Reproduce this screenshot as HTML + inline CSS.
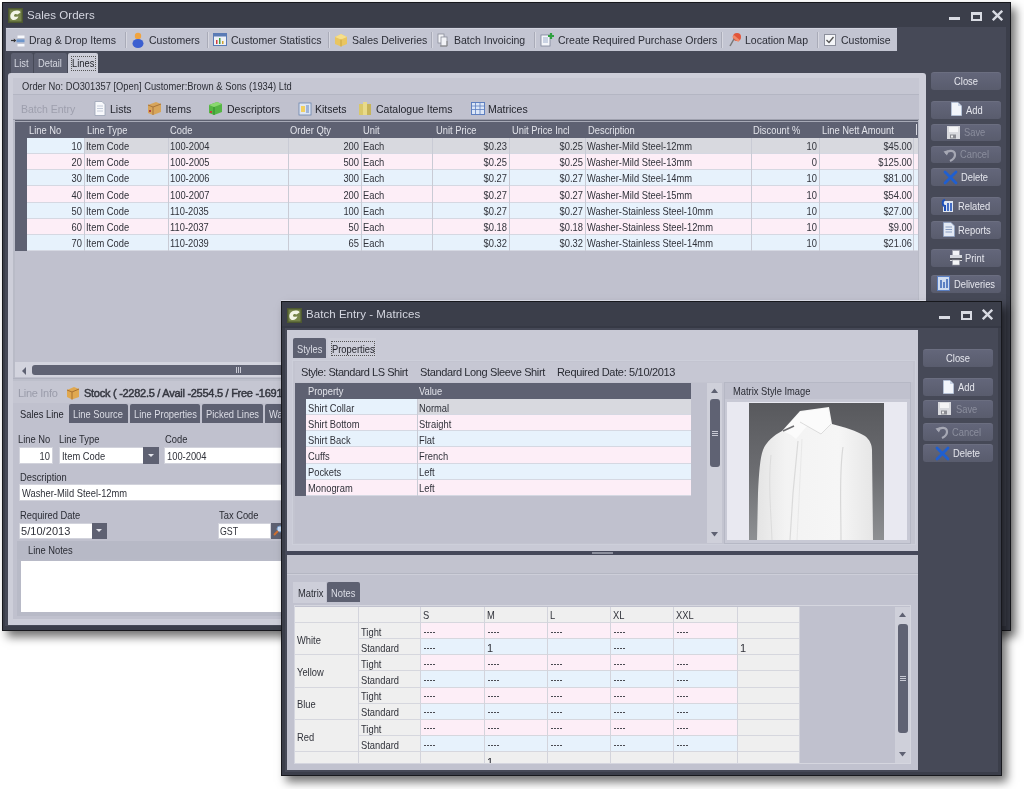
<!DOCTYPE html><html><head><meta charset="utf-8"><style>
html,body{margin:0;padding:0;background:#fff;width:1024px;height:789px;overflow:hidden;position:relative;font-family:"Liberation Sans",sans-serif;}
body{filter:blur(0.5px);}
div{position:absolute;box-sizing:border-box;}
.t{white-space:nowrap;}
</style></head><body>
<div style="left:2px;top:2px;width:1009px;height:629px;box-shadow:5px 6px 9px rgba(0,0,0,0.55);background:#3b3e4a"></div>
<div style="left:2px;top:2px;width:1009px;height:629px;border:1px solid #17181d;background:#3b3e4a"></div>
<div style="left:5px;top:27px;width:1001px;height:599px;background:#464957"></div>
<svg style="position:absolute;left:8px;top:8px" width="15" height="15" viewBox="0 0 15 15"><rect x="0" y="0" width="15" height="15" fill="#4d5830"/><rect x="1.5" y="1.5" width="12" height="12" fill="#76844a"/><path d="M2.5 9.5 C1.5 5.5 5 2 9.5 2.5 C11.5 2.8 12.5 3.5 12.5 4.5 L9.5 6.5 C8 5.5 6 6 6 7.5 C6 8.5 7 9 8 8.8 L10.5 8.5 C9.5 11 7.5 12.5 5 12 C3.8 11.7 2.8 10.8 2.5 9.5 Z" fill="#f2f4e6"/></svg>
<div class="t" style="left:27px;top:9.77px;font-size:11.5px;line-height:11.5px;color:#d5d7e1;letter-spacing:0.05px;">Sales Orders</div>
<div style="left:949px;top:17px;width:11px;height:3px;background:#d9dbe3"></div>
<div style="left:971px;top:12px;width:11px;height:9px;border:2px solid #d9dbe3;border-top-width:3px"></div>
<svg style="position:absolute;left:992px;top:10px" width="11" height="11" viewBox="0 0 11 11"><path d="M1.6 1.6 L9.4 9.4 M9.4 1.6 L1.6 9.4" stroke="#d9dbe3" stroke-width="2.3" stroke-linecap="square"/></svg>
<div style="left:6px;top:28px;width:891px;height:23px;background:#c3c5d2;border-top:1px solid #d2d4df"></div>
<div class="t" style="left:29px;top:35.11px;font-size:10.5px;line-height:10.5px;color:#2b2d36;letter-spacing:0px;">Drag &amp; Drop Items</div>
<div style="left:125px;top:32px;width:1px;height:16px;background:#a9abb8;border-right:1px solid #d6d7e0;width:2px"></div>
<div class="t" style="left:149px;top:35.11px;font-size:10.5px;line-height:10.5px;color:#2b2d36;letter-spacing:0px;">Customers</div>
<div style="left:207px;top:32px;width:1px;height:16px;background:#a9abb8;border-right:1px solid #d6d7e0;width:2px"></div>
<div class="t" style="left:231px;top:35.11px;font-size:10.5px;line-height:10.5px;color:#2b2d36;letter-spacing:0px;">Customer Statistics</div>
<div style="left:328px;top:32px;width:1px;height:16px;background:#a9abb8;border-right:1px solid #d6d7e0;width:2px"></div>
<div class="t" style="left:352px;top:35.11px;font-size:10.5px;line-height:10.5px;color:#2b2d36;letter-spacing:0px;">Sales Deliveries</div>
<div style="left:431px;top:32px;width:1px;height:16px;background:#a9abb8;border-right:1px solid #d6d7e0;width:2px"></div>
<div class="t" style="left:454px;top:35.11px;font-size:10.5px;line-height:10.5px;color:#2b2d36;letter-spacing:0px;">Batch Invoicing</div>
<div style="left:534px;top:32px;width:1px;height:16px;background:#a9abb8;border-right:1px solid #d6d7e0;width:2px"></div>
<div class="t" style="left:558px;top:35.11px;font-size:10.5px;line-height:10.5px;color:#2b2d36;letter-spacing:0px;">Create Required Purchase Orders</div>
<div style="left:721px;top:32px;width:1px;height:16px;background:#a9abb8;border-right:1px solid #d6d7e0;width:2px"></div>
<div class="t" style="left:745px;top:35.11px;font-size:10.5px;line-height:10.5px;color:#2b2d36;letter-spacing:0px;">Location Map</div>
<div style="left:817px;top:32px;width:1px;height:16px;background:#a9abb8;border-right:1px solid #d6d7e0;width:2px"></div>
<div class="t" style="left:841px;top:35.11px;font-size:10.5px;line-height:10.5px;color:#2b2d36;letter-spacing:0px;">Customise</div>
<svg style="position:absolute;left:10px;top:33px" width="16" height="15" viewBox="0 0 16 15"><path d="M1 7.5 H4.5" stroke="#333" stroke-width="1.2"/><path d="M3.8 5.5 L6.3 7.5 L3.8 9.5 Z" fill="#333"/><rect x="7.5" y="2.5" width="7" height="2.5" fill="#f6f8fc"/><rect x="6.5" y="6.3" width="8" height="3" fill="#6d96cc"/><rect x="7.5" y="11" width="7" height="2.5" fill="#f6f8fc"/></svg>
<svg style="position:absolute;left:132px;top:32px" width="12" height="16" viewBox="0 0 12 16"><circle cx="6" cy="4" r="3.2" fill="#f0a440"/><ellipse cx="6" cy="11.5" rx="5.5" ry="4.5" fill="#3b5fd0"/></svg>
<svg style="position:absolute;left:213px;top:33px" width="14" height="13" viewBox="0 0 14 13"><rect x="0.5" y="0.5" width="13" height="12" fill="#eef1f6" stroke="#5a7bb5"/><rect x="0.5" y="0.5" width="13" height="3" fill="#5a7bb5"/><rect x="3" y="7" width="1.5" height="4" fill="#d04040"/><rect x="6" y="5" width="1.5" height="6" fill="#40a040"/><rect x="9" y="8" width="1.5" height="3" fill="#d0a030"/></svg>
<svg style="position:absolute;left:334px;top:33px" width="14" height="14" viewBox="0 0 14 14"><path d="M1 4 L7 1 L13 4 L13 11 L7 13.5 L1 11 Z" fill="#e9c560"/><path d="M1 4 L7 6.5 L13 4 L7 1 Z" fill="#f6df8a"/><path d="M7 6.5 V13.5" stroke="#c9a440"/></svg>
<svg style="position:absolute;left:436px;top:33px" width="14" height="14" viewBox="0 0 14 14"><rect x="2" y="1" width="6" height="9" fill="#f2f3f7" stroke="#8a8d99" stroke-width="0.8"/><rect x="5" y="4" width="6" height="9" fill="#f2f3f7" stroke="#8a8d99" stroke-width="0.8"/><path d="M11 8 V13 H4" stroke="#888" fill="none"/></svg>
<svg style="position:absolute;left:540px;top:32px" width="15" height="15" viewBox="0 0 15 15"><rect x="1" y="3" width="9" height="11" fill="#f4f6fa" stroke="#7d8599" stroke-width="0.8"/><path d="M3 6 H8 M3 8 H8 M3 10 H8" stroke="#8aa0c0" stroke-width="0.8"/><path d="M11 1 V7 M8 4 H14" stroke="#2fa040" stroke-width="2.2"/></svg>
<svg style="position:absolute;left:728px;top:32px" width="14" height="16" viewBox="0 0 14 16"><circle cx="9" cy="5" r="4" fill="#e2553a"/><path d="M6 7 L2 14" stroke="#777" stroke-width="1.5"/><path d="M5 4 L11 9" stroke="#f08a6a" stroke-width="2.5"/></svg>
<svg style="position:absolute;left:824px;top:34px" width="12" height="12" viewBox="0 0 12 12"><rect x="0.5" y="0.5" width="11" height="11" fill="#f4f5f8" stroke="#8c8f9c"/><path d="M2.5 6 L5 8.5 L9.5 3" stroke="#555" stroke-width="1.3" fill="none"/></svg>
<div style="left:11px;top:53px;width:22px;height:20px;background:#5d6071;border-radius:2px 2px 0 0"></div>
<div class="t" style="left:14px;top:58.19px;font-size:11px;line-height:11px;color:#d6d8e2;letter-spacing:0px;transform:scaleX(0.85);transform-origin:left center;">List</div>
<div style="left:34px;top:53px;width:33px;height:20px;background:#5d6071;border-radius:2px 2px 0 0"></div>
<div class="t" style="left:38px;top:58.19px;font-size:11px;line-height:11px;color:#d6d8e2;letter-spacing:0px;transform:scaleX(0.85);transform-origin:left center;">Detail</div>
<div style="left:68px;top:53px;width:30px;height:21px;background:#cdced9;border-radius:2px 2px 0 0"></div>
<div style="left:71px;top:56px;width:25px;height:15px;border:1px dotted #555"></div>
<div class="t" style="left:72px;top:58.19px;font-size:11px;line-height:11px;color:#1e1f26;letter-spacing:0px;transform:scaleX(0.85);transform-origin:left center;">Lines</div>
<div style="left:8px;top:73px;width:918px;height:552px;background:#cdced9;border-radius:3px 3px 0 0"></div>
<div style="left:13px;top:78px;width:906px;height:541px;background:#c0c1ce"></div>
<div style="left:13px;top:78px;width:906px;height:17px;background:#c6c7d3;border-bottom:1px solid #b4b6c3"></div>
<div class="t" style="left:22px;top:80.69px;font-size:11px;line-height:11px;color:#2c2e36;letter-spacing:0px;transform:scaleX(0.85);transform-origin:left center;">Order No: DO301357 [Open] Customer:Brown &amp; Sons (1934) Ltd</div>
<div class="t" style="left:21px;top:104.11px;font-size:10.5px;line-height:10.5px;color:#9d9fad;letter-spacing:0px;">Batch Entry</div>
<div class="t" style="left:110px;top:104.11px;font-size:10.5px;line-height:10.5px;color:#23252d;letter-spacing:0px;">Lists</div>
<div class="t" style="left:165.5px;top:104.11px;font-size:10.5px;line-height:10.5px;color:#23252d;letter-spacing:0px;">Items</div>
<div class="t" style="left:227px;top:104.11px;font-size:10.5px;line-height:10.5px;color:#23252d;letter-spacing:0px;">Descriptors</div>
<div class="t" style="left:315px;top:104.11px;font-size:10.5px;line-height:10.5px;color:#23252d;letter-spacing:0px;">Kitsets</div>
<div class="t" style="left:376px;top:104.11px;font-size:10.5px;line-height:10.5px;color:#23252d;letter-spacing:0px;">Catalogue Items</div>
<div class="t" style="left:488px;top:104.11px;font-size:10.5px;line-height:10.5px;color:#23252d;letter-spacing:0px;">Matrices</div>
<svg style="position:absolute;left:94px;top:101px" width="12" height="15" viewBox="0 0 12 15"><path d="M1 0.5 H8 L11 3.5 V14.5 H1 Z" fill="#f8f9fc" stroke="#9aa3b5" stroke-width="0.8"/><path d="M3 5 H9 M3 7.5 H9 M3 10 H9" stroke="#b5bfd0" stroke-width="0.8"/></svg>
<svg style="position:absolute;left:147px;top:101px" width="15" height="15" viewBox="0 0 15 15"><path d="M1 4 L9 1 L14 3 L14 11 L6 14 L1 12 Z" fill="#d7a55a"/><path d="M1 4 L6 6 L14 3" stroke="#a8743a" fill="none"/><path d="M6 6 V14" stroke="#a8743a"/><rect x="2" y="9" width="2" height="2" fill="#b04040"/></svg>
<svg style="position:absolute;left:208px;top:101px" width="15" height="15" viewBox="0 0 15 15"><path d="M1 4 L9 1 L14 3 L14 11 L6 14 L1 12 Z" fill="#55b544"/><path d="M1 4 L6 6 L14 3 L9 1 Z" fill="#8ad870"/><path d="M6 6 V14" stroke="#2f8a2a"/><rect x="2" y="10" width="2" height="2" fill="#c04040"/></svg>
<svg style="position:absolute;left:298px;top:101px" width="14" height="15" viewBox="0 0 14 15"><rect x="1" y="2" width="12" height="12" fill="#dfe7f2" stroke="#6b86b0" stroke-width="0.8"/><rect x="3" y="5" width="4" height="6" fill="#f2d060"/><rect x="8" y="4" width="3" height="8" fill="#9fb4d8"/></svg>
<svg style="position:absolute;left:358px;top:101px" width="14" height="15" viewBox="0 0 14 15"><rect x="1" y="3" width="4" height="11" fill="#d9c86a"/><rect x="5" y="1" width="4" height="13" fill="#e8da8a"/><rect x="9" y="3" width="4" height="11" fill="#c7b45a"/></svg>
<svg style="position:absolute;left:471px;top:102px" width="14" height="13" viewBox="0 0 14 13"><rect x="0.5" y="0.5" width="13" height="12" fill="#dbe6f7" stroke="#5d7fc0"/><path d="M0.5 4 H13.5 M0.5 7.5 H13.5 M4.5 0.5 V12.5 M9 0.5 V12.5" stroke="#5d7fc0" stroke-width="0.8"/></svg>
<div style="left:13px;top:119px;width:906px;height:1px;background:#9fa1ae"></div>
<div style="left:13px;top:120px;width:906px;height:260px;background:#b9bbc7"></div>
<div style="left:15px;top:120px;width:903px;height:259px;background:#c0c1ce"></div>
<div style="left:15px;top:120px;width:903px;height:1px;background:#5d6070"></div>
<div style="left:15px;top:121px;width:903px;height:1px;background:#a7a9b6"></div>
<div style="left:15px;top:122px;width:903px;height:16px;background:#5e6172"></div>
<div style="left:15px;top:138px;width:12px;height:113px;background:#5e6172"></div>
<div class="t" style="left:29px;top:124.69px;font-size:11px;line-height:11px;color:#e2e3ea;letter-spacing:0px;transform:scaleX(0.85);transform-origin:left center;">Line No</div>
<div class="t" style="left:87px;top:124.69px;font-size:11px;line-height:11px;color:#e2e3ea;letter-spacing:0px;transform:scaleX(0.85);transform-origin:left center;">Line Type</div>
<div class="t" style="left:170px;top:124.69px;font-size:11px;line-height:11px;color:#e2e3ea;letter-spacing:0px;transform:scaleX(0.85);transform-origin:left center;">Code</div>
<div class="t" style="left:290px;top:124.69px;font-size:11px;line-height:11px;color:#e2e3ea;letter-spacing:0px;transform:scaleX(0.85);transform-origin:left center;">Order Qty</div>
<div class="t" style="left:363px;top:124.69px;font-size:11px;line-height:11px;color:#e2e3ea;letter-spacing:0px;transform:scaleX(0.85);transform-origin:left center;">Unit</div>
<div class="t" style="left:436px;top:124.69px;font-size:11px;line-height:11px;color:#e2e3ea;letter-spacing:0px;transform:scaleX(0.85);transform-origin:left center;">Unit Price</div>
<div class="t" style="left:512px;top:124.69px;font-size:11px;line-height:11px;color:#e2e3ea;letter-spacing:0px;transform:scaleX(0.85);transform-origin:left center;">Unit Price Incl</div>
<div class="t" style="left:588px;top:124.69px;font-size:11px;line-height:11px;color:#e2e3ea;letter-spacing:0px;transform:scaleX(0.85);transform-origin:left center;">Description</div>
<div class="t" style="left:753px;top:124.69px;font-size:11px;line-height:11px;color:#e2e3ea;letter-spacing:0px;transform:scaleX(0.85);transform-origin:left center;">Discount %</div>
<div class="t" style="left:822px;top:124.69px;font-size:11px;line-height:11px;color:#e2e3ea;letter-spacing:0px;transform:scaleX(0.85);transform-origin:left center;">Line Nett Amount</div>
<div style="left:916px;top:124px;width:1px;height:11px;background:#d9dae2"></div>
<div style="left:27px;top:138px;width:891px;height:16px;background:#d8d9df;border-bottom:1px solid #d5d8e2"></div>
<div style="left:27px;top:138px;width:57px;height:16px;background:#e7f2fc;border-bottom:1px solid #d5d8e2"></div>
<div style="left:84px;top:138px;width:1px;height:16px;background:#c9cbd5"></div>
<div style="left:168px;top:138px;width:1px;height:16px;background:#c9cbd5"></div>
<div style="left:288px;top:138px;width:1px;height:16px;background:#c9cbd5"></div>
<div style="left:361px;top:138px;width:1px;height:16px;background:#c9cbd5"></div>
<div style="left:432px;top:138px;width:1px;height:16px;background:#c9cbd5"></div>
<div style="left:509px;top:138px;width:1px;height:16px;background:#c9cbd5"></div>
<div style="left:585px;top:138px;width:1px;height:16px;background:#c9cbd5"></div>
<div style="left:751px;top:138px;width:1px;height:16px;background:#c9cbd5"></div>
<div style="left:819px;top:138px;width:1px;height:16px;background:#c9cbd5"></div>
<div style="left:913px;top:138px;width:1px;height:16px;background:#c9cbd5"></div>
<div class="t" style="left:32px;top:141.19px;width:50px;text-align:right;font-size:11px;line-height:11px;color:#30323a;letter-spacing:0px;transform:scaleX(0.85);transform-origin:right center;">10</div>
<div class="t" style="left:86px;top:141.19px;font-size:11px;line-height:11px;color:#30323a;letter-spacing:0px;transform:scaleX(0.85);transform-origin:left center;">Item Code</div>
<div class="t" style="left:170px;top:141.19px;font-size:11px;line-height:11px;color:#30323a;letter-spacing:0px;transform:scaleX(0.85);transform-origin:left center;">100-2004</div>
<div class="t" style="left:299px;top:141.19px;width:60px;text-align:right;font-size:11px;line-height:11px;color:#30323a;letter-spacing:0px;transform:scaleX(0.85);transform-origin:right center;">200</div>
<div class="t" style="left:363px;top:141.19px;font-size:11px;line-height:11px;color:#30323a;letter-spacing:0px;transform:scaleX(0.85);transform-origin:left center;">Each</div>
<div class="t" style="left:447px;top:141.19px;width:60px;text-align:right;font-size:11px;line-height:11px;color:#30323a;letter-spacing:0px;transform:scaleX(0.85);transform-origin:right center;">$0.23</div>
<div class="t" style="left:523px;top:141.19px;width:60px;text-align:right;font-size:11px;line-height:11px;color:#30323a;letter-spacing:0px;transform:scaleX(0.85);transform-origin:right center;">$0.25</div>
<div class="t" style="left:587px;top:141.19px;font-size:11px;line-height:11px;color:#30323a;letter-spacing:0px;transform:scaleX(0.85);transform-origin:left center;">Washer-Mild Steel-12mm</div>
<div class="t" style="left:757px;top:141.19px;width:60px;text-align:right;font-size:11px;line-height:11px;color:#30323a;letter-spacing:0px;transform:scaleX(0.85);transform-origin:right center;">10</div>
<div class="t" style="left:832px;top:141.19px;width:80px;text-align:right;font-size:11px;line-height:11px;color:#30323a;letter-spacing:0px;transform:scaleX(0.85);transform-origin:right center;">$45.00</div>
<div style="left:27px;top:154px;width:891px;height:16px;background:#fdeef7;border-bottom:1px solid #d5d8e2"></div>
<div style="left:84px;top:154px;width:1px;height:16px;background:#c9cbd5"></div>
<div style="left:168px;top:154px;width:1px;height:16px;background:#c9cbd5"></div>
<div style="left:288px;top:154px;width:1px;height:16px;background:#c9cbd5"></div>
<div style="left:361px;top:154px;width:1px;height:16px;background:#c9cbd5"></div>
<div style="left:432px;top:154px;width:1px;height:16px;background:#c9cbd5"></div>
<div style="left:509px;top:154px;width:1px;height:16px;background:#c9cbd5"></div>
<div style="left:585px;top:154px;width:1px;height:16px;background:#c9cbd5"></div>
<div style="left:751px;top:154px;width:1px;height:16px;background:#c9cbd5"></div>
<div style="left:819px;top:154px;width:1px;height:16px;background:#c9cbd5"></div>
<div style="left:913px;top:154px;width:1px;height:16px;background:#c9cbd5"></div>
<div class="t" style="left:32px;top:157.34px;width:50px;text-align:right;font-size:11px;line-height:11px;color:#30323a;letter-spacing:0px;transform:scaleX(0.85);transform-origin:right center;">20</div>
<div class="t" style="left:86px;top:157.34px;font-size:11px;line-height:11px;color:#30323a;letter-spacing:0px;transform:scaleX(0.85);transform-origin:left center;">Item Code</div>
<div class="t" style="left:170px;top:157.34px;font-size:11px;line-height:11px;color:#30323a;letter-spacing:0px;transform:scaleX(0.85);transform-origin:left center;">100-2005</div>
<div class="t" style="left:299px;top:157.34px;width:60px;text-align:right;font-size:11px;line-height:11px;color:#30323a;letter-spacing:0px;transform:scaleX(0.85);transform-origin:right center;">500</div>
<div class="t" style="left:363px;top:157.34px;font-size:11px;line-height:11px;color:#30323a;letter-spacing:0px;transform:scaleX(0.85);transform-origin:left center;">Each</div>
<div class="t" style="left:447px;top:157.34px;width:60px;text-align:right;font-size:11px;line-height:11px;color:#30323a;letter-spacing:0px;transform:scaleX(0.85);transform-origin:right center;">$0.25</div>
<div class="t" style="left:523px;top:157.34px;width:60px;text-align:right;font-size:11px;line-height:11px;color:#30323a;letter-spacing:0px;transform:scaleX(0.85);transform-origin:right center;">$0.25</div>
<div class="t" style="left:587px;top:157.34px;font-size:11px;line-height:11px;color:#30323a;letter-spacing:0px;transform:scaleX(0.85);transform-origin:left center;">Washer-Mild Steel-13mm</div>
<div class="t" style="left:757px;top:157.34px;width:60px;text-align:right;font-size:11px;line-height:11px;color:#30323a;letter-spacing:0px;transform:scaleX(0.85);transform-origin:right center;">0</div>
<div class="t" style="left:832px;top:157.34px;width:80px;text-align:right;font-size:11px;line-height:11px;color:#30323a;letter-spacing:0px;transform:scaleX(0.85);transform-origin:right center;">$125.00</div>
<div style="left:27px;top:170px;width:891px;height:16px;background:#e7f2fc;border-bottom:1px solid #d5d8e2"></div>
<div style="left:84px;top:170px;width:1px;height:16px;background:#c9cbd5"></div>
<div style="left:168px;top:170px;width:1px;height:16px;background:#c9cbd5"></div>
<div style="left:288px;top:170px;width:1px;height:16px;background:#c9cbd5"></div>
<div style="left:361px;top:170px;width:1px;height:16px;background:#c9cbd5"></div>
<div style="left:432px;top:170px;width:1px;height:16px;background:#c9cbd5"></div>
<div style="left:509px;top:170px;width:1px;height:16px;background:#c9cbd5"></div>
<div style="left:585px;top:170px;width:1px;height:16px;background:#c9cbd5"></div>
<div style="left:751px;top:170px;width:1px;height:16px;background:#c9cbd5"></div>
<div style="left:819px;top:170px;width:1px;height:16px;background:#c9cbd5"></div>
<div style="left:913px;top:170px;width:1px;height:16px;background:#c9cbd5"></div>
<div class="t" style="left:32px;top:173.49px;width:50px;text-align:right;font-size:11px;line-height:11px;color:#30323a;letter-spacing:0px;transform:scaleX(0.85);transform-origin:right center;">30</div>
<div class="t" style="left:86px;top:173.49px;font-size:11px;line-height:11px;color:#30323a;letter-spacing:0px;transform:scaleX(0.85);transform-origin:left center;">Item Code</div>
<div class="t" style="left:170px;top:173.49px;font-size:11px;line-height:11px;color:#30323a;letter-spacing:0px;transform:scaleX(0.85);transform-origin:left center;">100-2006</div>
<div class="t" style="left:299px;top:173.49px;width:60px;text-align:right;font-size:11px;line-height:11px;color:#30323a;letter-spacing:0px;transform:scaleX(0.85);transform-origin:right center;">300</div>
<div class="t" style="left:363px;top:173.49px;font-size:11px;line-height:11px;color:#30323a;letter-spacing:0px;transform:scaleX(0.85);transform-origin:left center;">Each</div>
<div class="t" style="left:447px;top:173.49px;width:60px;text-align:right;font-size:11px;line-height:11px;color:#30323a;letter-spacing:0px;transform:scaleX(0.85);transform-origin:right center;">$0.27</div>
<div class="t" style="left:523px;top:173.49px;width:60px;text-align:right;font-size:11px;line-height:11px;color:#30323a;letter-spacing:0px;transform:scaleX(0.85);transform-origin:right center;">$0.27</div>
<div class="t" style="left:587px;top:173.49px;font-size:11px;line-height:11px;color:#30323a;letter-spacing:0px;transform:scaleX(0.85);transform-origin:left center;">Washer-Mild Steel-14mm</div>
<div class="t" style="left:757px;top:173.49px;width:60px;text-align:right;font-size:11px;line-height:11px;color:#30323a;letter-spacing:0px;transform:scaleX(0.85);transform-origin:right center;">10</div>
<div class="t" style="left:832px;top:173.49px;width:80px;text-align:right;font-size:11px;line-height:11px;color:#30323a;letter-spacing:0px;transform:scaleX(0.85);transform-origin:right center;">$81.00</div>
<div style="left:27px;top:186px;width:891px;height:17px;background:#fdeef7;border-bottom:1px solid #d5d8e2"></div>
<div style="left:84px;top:186px;width:1px;height:17px;background:#c9cbd5"></div>
<div style="left:168px;top:186px;width:1px;height:17px;background:#c9cbd5"></div>
<div style="left:288px;top:186px;width:1px;height:17px;background:#c9cbd5"></div>
<div style="left:361px;top:186px;width:1px;height:17px;background:#c9cbd5"></div>
<div style="left:432px;top:186px;width:1px;height:17px;background:#c9cbd5"></div>
<div style="left:509px;top:186px;width:1px;height:17px;background:#c9cbd5"></div>
<div style="left:585px;top:186px;width:1px;height:17px;background:#c9cbd5"></div>
<div style="left:751px;top:186px;width:1px;height:17px;background:#c9cbd5"></div>
<div style="left:819px;top:186px;width:1px;height:17px;background:#c9cbd5"></div>
<div style="left:913px;top:186px;width:1px;height:17px;background:#c9cbd5"></div>
<div class="t" style="left:32px;top:189.64px;width:50px;text-align:right;font-size:11px;line-height:11px;color:#30323a;letter-spacing:0px;transform:scaleX(0.85);transform-origin:right center;">40</div>
<div class="t" style="left:86px;top:189.64px;font-size:11px;line-height:11px;color:#30323a;letter-spacing:0px;transform:scaleX(0.85);transform-origin:left center;">Item Code</div>
<div class="t" style="left:170px;top:189.64px;font-size:11px;line-height:11px;color:#30323a;letter-spacing:0px;transform:scaleX(0.85);transform-origin:left center;">100-2007</div>
<div class="t" style="left:299px;top:189.64px;width:60px;text-align:right;font-size:11px;line-height:11px;color:#30323a;letter-spacing:0px;transform:scaleX(0.85);transform-origin:right center;">200</div>
<div class="t" style="left:363px;top:189.64px;font-size:11px;line-height:11px;color:#30323a;letter-spacing:0px;transform:scaleX(0.85);transform-origin:left center;">Each</div>
<div class="t" style="left:447px;top:189.64px;width:60px;text-align:right;font-size:11px;line-height:11px;color:#30323a;letter-spacing:0px;transform:scaleX(0.85);transform-origin:right center;">$0.27</div>
<div class="t" style="left:523px;top:189.64px;width:60px;text-align:right;font-size:11px;line-height:11px;color:#30323a;letter-spacing:0px;transform:scaleX(0.85);transform-origin:right center;">$0.27</div>
<div class="t" style="left:587px;top:189.64px;font-size:11px;line-height:11px;color:#30323a;letter-spacing:0px;transform:scaleX(0.85);transform-origin:left center;">Washer-Mild Steel-15mm</div>
<div class="t" style="left:757px;top:189.64px;width:60px;text-align:right;font-size:11px;line-height:11px;color:#30323a;letter-spacing:0px;transform:scaleX(0.85);transform-origin:right center;">10</div>
<div class="t" style="left:832px;top:189.64px;width:80px;text-align:right;font-size:11px;line-height:11px;color:#30323a;letter-spacing:0px;transform:scaleX(0.85);transform-origin:right center;">$54.00</div>
<div style="left:27px;top:203px;width:891px;height:16px;background:#e7f2fc;border-bottom:1px solid #d5d8e2"></div>
<div style="left:84px;top:203px;width:1px;height:16px;background:#c9cbd5"></div>
<div style="left:168px;top:203px;width:1px;height:16px;background:#c9cbd5"></div>
<div style="left:288px;top:203px;width:1px;height:16px;background:#c9cbd5"></div>
<div style="left:361px;top:203px;width:1px;height:16px;background:#c9cbd5"></div>
<div style="left:432px;top:203px;width:1px;height:16px;background:#c9cbd5"></div>
<div style="left:509px;top:203px;width:1px;height:16px;background:#c9cbd5"></div>
<div style="left:585px;top:203px;width:1px;height:16px;background:#c9cbd5"></div>
<div style="left:751px;top:203px;width:1px;height:16px;background:#c9cbd5"></div>
<div style="left:819px;top:203px;width:1px;height:16px;background:#c9cbd5"></div>
<div style="left:913px;top:203px;width:1px;height:16px;background:#c9cbd5"></div>
<div class="t" style="left:32px;top:205.79px;width:50px;text-align:right;font-size:11px;line-height:11px;color:#30323a;letter-spacing:0px;transform:scaleX(0.85);transform-origin:right center;">50</div>
<div class="t" style="left:86px;top:205.79px;font-size:11px;line-height:11px;color:#30323a;letter-spacing:0px;transform:scaleX(0.85);transform-origin:left center;">Item Code</div>
<div class="t" style="left:170px;top:205.79px;font-size:11px;line-height:11px;color:#30323a;letter-spacing:0px;transform:scaleX(0.85);transform-origin:left center;">110-2035</div>
<div class="t" style="left:299px;top:205.79px;width:60px;text-align:right;font-size:11px;line-height:11px;color:#30323a;letter-spacing:0px;transform:scaleX(0.85);transform-origin:right center;">100</div>
<div class="t" style="left:363px;top:205.79px;font-size:11px;line-height:11px;color:#30323a;letter-spacing:0px;transform:scaleX(0.85);transform-origin:left center;">Each</div>
<div class="t" style="left:447px;top:205.79px;width:60px;text-align:right;font-size:11px;line-height:11px;color:#30323a;letter-spacing:0px;transform:scaleX(0.85);transform-origin:right center;">$0.27</div>
<div class="t" style="left:523px;top:205.79px;width:60px;text-align:right;font-size:11px;line-height:11px;color:#30323a;letter-spacing:0px;transform:scaleX(0.85);transform-origin:right center;">$0.27</div>
<div class="t" style="left:587px;top:205.79px;font-size:11px;line-height:11px;color:#30323a;letter-spacing:0px;transform:scaleX(0.85);transform-origin:left center;">Washer-Stainless Steel-10mm</div>
<div class="t" style="left:757px;top:205.79px;width:60px;text-align:right;font-size:11px;line-height:11px;color:#30323a;letter-spacing:0px;transform:scaleX(0.85);transform-origin:right center;">10</div>
<div class="t" style="left:832px;top:205.79px;width:80px;text-align:right;font-size:11px;line-height:11px;color:#30323a;letter-spacing:0px;transform:scaleX(0.85);transform-origin:right center;">$27.00</div>
<div style="left:27px;top:219px;width:891px;height:16px;background:#fdeef7;border-bottom:1px solid #d5d8e2"></div>
<div style="left:84px;top:219px;width:1px;height:16px;background:#c9cbd5"></div>
<div style="left:168px;top:219px;width:1px;height:16px;background:#c9cbd5"></div>
<div style="left:288px;top:219px;width:1px;height:16px;background:#c9cbd5"></div>
<div style="left:361px;top:219px;width:1px;height:16px;background:#c9cbd5"></div>
<div style="left:432px;top:219px;width:1px;height:16px;background:#c9cbd5"></div>
<div style="left:509px;top:219px;width:1px;height:16px;background:#c9cbd5"></div>
<div style="left:585px;top:219px;width:1px;height:16px;background:#c9cbd5"></div>
<div style="left:751px;top:219px;width:1px;height:16px;background:#c9cbd5"></div>
<div style="left:819px;top:219px;width:1px;height:16px;background:#c9cbd5"></div>
<div style="left:913px;top:219px;width:1px;height:16px;background:#c9cbd5"></div>
<div class="t" style="left:32px;top:221.94px;width:50px;text-align:right;font-size:11px;line-height:11px;color:#30323a;letter-spacing:0px;transform:scaleX(0.85);transform-origin:right center;">60</div>
<div class="t" style="left:86px;top:221.94px;font-size:11px;line-height:11px;color:#30323a;letter-spacing:0px;transform:scaleX(0.85);transform-origin:left center;">Item Code</div>
<div class="t" style="left:170px;top:221.94px;font-size:11px;line-height:11px;color:#30323a;letter-spacing:0px;transform:scaleX(0.85);transform-origin:left center;">110-2037</div>
<div class="t" style="left:299px;top:221.94px;width:60px;text-align:right;font-size:11px;line-height:11px;color:#30323a;letter-spacing:0px;transform:scaleX(0.85);transform-origin:right center;">50</div>
<div class="t" style="left:363px;top:221.94px;font-size:11px;line-height:11px;color:#30323a;letter-spacing:0px;transform:scaleX(0.85);transform-origin:left center;">Each</div>
<div class="t" style="left:447px;top:221.94px;width:60px;text-align:right;font-size:11px;line-height:11px;color:#30323a;letter-spacing:0px;transform:scaleX(0.85);transform-origin:right center;">$0.18</div>
<div class="t" style="left:523px;top:221.94px;width:60px;text-align:right;font-size:11px;line-height:11px;color:#30323a;letter-spacing:0px;transform:scaleX(0.85);transform-origin:right center;">$0.18</div>
<div class="t" style="left:587px;top:221.94px;font-size:11px;line-height:11px;color:#30323a;letter-spacing:0px;transform:scaleX(0.85);transform-origin:left center;">Washer-Stainless Steel-12mm</div>
<div class="t" style="left:757px;top:221.94px;width:60px;text-align:right;font-size:11px;line-height:11px;color:#30323a;letter-spacing:0px;transform:scaleX(0.85);transform-origin:right center;">10</div>
<div class="t" style="left:832px;top:221.94px;width:80px;text-align:right;font-size:11px;line-height:11px;color:#30323a;letter-spacing:0px;transform:scaleX(0.85);transform-origin:right center;">$9.00</div>
<div style="left:27px;top:235px;width:891px;height:16px;background:#e7f2fc;border-bottom:1px solid #d5d8e2"></div>
<div style="left:84px;top:235px;width:1px;height:16px;background:#c9cbd5"></div>
<div style="left:168px;top:235px;width:1px;height:16px;background:#c9cbd5"></div>
<div style="left:288px;top:235px;width:1px;height:16px;background:#c9cbd5"></div>
<div style="left:361px;top:235px;width:1px;height:16px;background:#c9cbd5"></div>
<div style="left:432px;top:235px;width:1px;height:16px;background:#c9cbd5"></div>
<div style="left:509px;top:235px;width:1px;height:16px;background:#c9cbd5"></div>
<div style="left:585px;top:235px;width:1px;height:16px;background:#c9cbd5"></div>
<div style="left:751px;top:235px;width:1px;height:16px;background:#c9cbd5"></div>
<div style="left:819px;top:235px;width:1px;height:16px;background:#c9cbd5"></div>
<div style="left:913px;top:235px;width:1px;height:16px;background:#c9cbd5"></div>
<div class="t" style="left:32px;top:238.09px;width:50px;text-align:right;font-size:11px;line-height:11px;color:#30323a;letter-spacing:0px;transform:scaleX(0.85);transform-origin:right center;">70</div>
<div class="t" style="left:86px;top:238.09px;font-size:11px;line-height:11px;color:#30323a;letter-spacing:0px;transform:scaleX(0.85);transform-origin:left center;">Item Code</div>
<div class="t" style="left:170px;top:238.09px;font-size:11px;line-height:11px;color:#30323a;letter-spacing:0px;transform:scaleX(0.85);transform-origin:left center;">110-2039</div>
<div class="t" style="left:299px;top:238.09px;width:60px;text-align:right;font-size:11px;line-height:11px;color:#30323a;letter-spacing:0px;transform:scaleX(0.85);transform-origin:right center;">65</div>
<div class="t" style="left:363px;top:238.09px;font-size:11px;line-height:11px;color:#30323a;letter-spacing:0px;transform:scaleX(0.85);transform-origin:left center;">Each</div>
<div class="t" style="left:447px;top:238.09px;width:60px;text-align:right;font-size:11px;line-height:11px;color:#30323a;letter-spacing:0px;transform:scaleX(0.85);transform-origin:right center;">$0.32</div>
<div class="t" style="left:523px;top:238.09px;width:60px;text-align:right;font-size:11px;line-height:11px;color:#30323a;letter-spacing:0px;transform:scaleX(0.85);transform-origin:right center;">$0.32</div>
<div class="t" style="left:587px;top:238.09px;font-size:11px;line-height:11px;color:#30323a;letter-spacing:0px;transform:scaleX(0.85);transform-origin:left center;">Washer-Stainless Steel-14mm</div>
<div class="t" style="left:757px;top:238.09px;width:60px;text-align:right;font-size:11px;line-height:11px;color:#30323a;letter-spacing:0px;transform:scaleX(0.85);transform-origin:right center;">10</div>
<div class="t" style="left:832px;top:238.09px;width:80px;text-align:right;font-size:11px;line-height:11px;color:#30323a;letter-spacing:0px;transform:scaleX(0.85);transform-origin:right center;">$21.06</div>
<div style="left:15px;top:362px;width:903px;height:15px;background:#d3d4de"></div>
<div style="left:13px;top:378px;width:906px;height:1px;background:#b0b2bf"></div>
<div style="left:13px;top:379px;width:906px;height:2px;background:#bdbfcb"></div>
<svg style="position:absolute;left:20px;top:366px" width="8" height="10" viewBox="0 0 8 10"><path d="M6 1 L2 5 L6 9 Z" fill="#5e6172"/></svg>
<div style="left:32px;top:365px;width:890px;height:10px;background:#5f6273;border-radius:3px"></div>
<div style="left:236px;top:367px;width:1px;height:6px;background:#c8c9d4"></div>
<div style="left:238px;top:367px;width:1px;height:6px;background:#c8c9d4"></div>
<div style="left:240px;top:367px;width:1px;height:6px;background:#c8c9d4"></div>
<div style="left:13px;top:381px;width:906px;height:22px;background:#c5c6d2"></div>
<div class="t" style="left:18px;top:387.69px;font-size:11px;line-height:11px;color:#9a9caa;letter-spacing:-0.3px;">Line Info</div>
<svg style="position:absolute;left:66px;top:386px" width="14" height="14" viewBox="0 0 14 14"><path d="M1 4 L8 1 L13 3 L13 11 L6 13.5 L1 11 Z" fill="#e0a850"/><path d="M1 4 L6 6 L13 3" stroke="#a87030" fill="none"/><path d="M6 6 V13.5" stroke="#a87030"/></svg>
<div class="t" style="left:84px;top:387.69px;font-size:11px;line-height:11px;color:#34363f;letter-spacing:-0.27px;-webkit-text-stroke:0.45px #34363f">Stock ( -2282.5 / Avail -2554.5 / Free -1691</div>
<div class="t" style="left:20px;top:408.69px;font-size:11px;line-height:11px;color:#23252d;letter-spacing:0px;transform:scaleX(0.85);transform-origin:left center;">Sales Line</div>
<div style="left:69px;top:404px;width:59px;height:19px;background:#5d6071;border-radius:2px 2px 0 0"></div>
<div class="t" style="left:73px;top:408.69px;font-size:11px;line-height:11px;color:#dcdde6;letter-spacing:0px;transform:scaleX(0.85);transform-origin:left center;">Line Source</div>
<div style="left:130px;top:404px;width:70px;height:19px;background:#5d6071;border-radius:2px 2px 0 0"></div>
<div class="t" style="left:134px;top:408.69px;font-size:11px;line-height:11px;color:#dcdde6;letter-spacing:0px;transform:scaleX(0.85);transform-origin:left center;">Line Properties</div>
<div style="left:202px;top:404px;width:61px;height:19px;background:#5d6071;border-radius:2px 2px 0 0"></div>
<div class="t" style="left:206px;top:408.69px;font-size:11px;line-height:11px;color:#dcdde6;letter-spacing:0px;transform:scaleX(0.85);transform-origin:left center;">Picked Lines</div>
<div style="left:265px;top:404px;width:35px;height:19px;background:#5d6071;border-radius:2px 2px 0 0"></div>
<div class="t" style="left:269px;top:408.69px;font-size:11px;line-height:11px;color:#dcdde6;letter-spacing:0px;transform:scaleX(0.85);transform-origin:left center;">Warehouse</div>
<div class="t" style="left:18px;top:433.69px;font-size:11px;line-height:11px;color:#2a2c34;letter-spacing:0px;transform:scaleX(0.85);transform-origin:left center;">Line No</div>
<div class="t" style="left:59px;top:433.69px;font-size:11px;line-height:11px;color:#2a2c34;letter-spacing:0px;transform:scaleX(0.85);transform-origin:left center;">Line Type</div>
<div class="t" style="left:164.5px;top:433.69px;font-size:11px;line-height:11px;color:#2a2c34;letter-spacing:0px;transform:scaleX(0.85);transform-origin:left center;">Code</div>
<div style="left:19px;top:447px;width:34px;height:17px;background:#fff;border:1px solid #d2d3dc"></div>
<div class="t" style="left:20px;top:450.69px;width:30px;text-align:right;font-size:11px;line-height:11px;color:#30323a;letter-spacing:0px;transform:scaleX(0.85);transform-origin:right center;">10</div>
<div style="left:59px;top:447px;width:100px;height:17px;background:#fff;border:1px solid #d2d3dc"></div>
<div class="t" style="left:62px;top:450.69px;font-size:11px;line-height:11px;color:#30323a;letter-spacing:0px;transform:scaleX(0.85);transform-origin:left center;">Item Code</div>
<div style="left:143px;top:447px;width:16px;height:17px;background:#5e6172"></div>
<svg style="position:absolute;left:147px;top:453px" width="8" height="5" viewBox="0 0 8 5"><path d="M1 1 H7 L4 4 Z" fill="#e4e5ec"/></svg>
<div style="left:164px;top:447px;width:140px;height:17px;background:#fff;border:1px solid #d2d3dc"></div>
<div class="t" style="left:167px;top:450.69px;font-size:11px;line-height:11px;color:#30323a;letter-spacing:0px;transform:scaleX(0.85);transform-origin:left center;">100-2004</div>
<div class="t" style="left:20px;top:471.69px;font-size:11px;line-height:11px;color:#2a2c34;letter-spacing:0px;transform:scaleX(0.85);transform-origin:left center;">Description</div>
<div style="left:19px;top:484px;width:300px;height:17px;background:#fff;border:1px solid #d2d3dc"></div>
<div class="t" style="left:22px;top:487.69px;font-size:11px;line-height:11px;color:#30323a;letter-spacing:0px;transform:scaleX(0.85);transform-origin:left center;">Washer-Mild Steel-12mm</div>
<div class="t" style="left:20px;top:509.69px;font-size:11px;line-height:11px;color:#2a2c34;letter-spacing:0px;transform:scaleX(0.85);transform-origin:left center;">Required Date</div>
<div class="t" style="left:219px;top:509.69px;font-size:11px;line-height:11px;color:#2a2c34;letter-spacing:0px;transform:scaleX(0.85);transform-origin:left center;">Tax Code</div>
<div style="left:19px;top:523px;width:88px;height:16px;background:#fff;border:1px solid #d2d3dc"></div>
<div class="t" style="left:21px;top:525.69px;font-size:11px;line-height:11px;color:#30323a;letter-spacing:0.05px;">5/10/2013</div>
<div style="left:92px;top:523px;width:15px;height:16px;background:#5e6172"></div>
<svg style="position:absolute;left:95px;top:528px" width="8" height="5" viewBox="0 0 8 5"><path d="M1 1 H7 L4 4 Z" fill="#e4e5ec"/></svg>
<div style="left:218px;top:523px;width:53px;height:16px;background:#fff;border:1px solid #d2d3dc"></div>
<div class="t" style="left:220px;top:525.69px;font-size:11px;line-height:11px;color:#30323a;letter-spacing:0px;transform:scaleX(0.8);transform-origin:left center;">GST</div>
<div style="left:271px;top:523px;width:15px;height:16px;background:#5e6172"></div>
<svg style="position:absolute;left:272px;top:525px" width="12" height="12" viewBox="0 0 12 12"><circle cx="8" cy="4" r="3" fill="#cfe0f5" stroke="#7aa0d0"/><path d="M6 6 L2 10" stroke="#d07030" stroke-width="2"/></svg>
<div style="left:17px;top:541px;width:302px;height:75px;background:#b8bac7"></div>
<div style="left:17px;top:541px;width:302px;height:18px;background:#b7b9c6"></div>
<div class="t" style="left:28px;top:544.69px;font-size:11px;line-height:11px;color:#2a2c34;letter-spacing:0px;transform:scaleX(0.85);transform-origin:left center;">Line Notes</div>
<div style="left:21px;top:561px;width:300px;height:51px;background:#fff"></div>
<div style="left:281px;top:301px;width:721px;height:475px;box-shadow:5px 6px 9px rgba(0,0,0,0.55);background:#3b3e4a"></div>
<div style="left:281px;top:301px;width:721px;height:475px;border:1px solid #17181d;background:#3b3e4a"></div>
<div style="left:285px;top:328px;width:713px;height:444px;background:#464957"></div>
<div style="left:282px;top:326px;width:719px;height:2px;background:#363945"></div>
<div style="left:281px;top:300px;width:645px;height:1px;background:#d8d9e3"></div>
<svg style="position:absolute;left:287px;top:308px" width="15" height="15" viewBox="0 0 15 15"><rect x="0" y="0" width="15" height="15" fill="#4d5830"/><rect x="1.5" y="1.5" width="12" height="12" fill="#76844a"/><path d="M2.5 9.5 C1.5 5.5 5 2 9.5 2.5 C11.5 2.8 12.5 3.5 12.5 4.5 L9.5 6.5 C8 5.5 6 6 6 7.5 C6 8.5 7 9 8 8.8 L10.5 8.5 C9.5 11 7.5 12.5 5 12 C3.8 11.7 2.8 10.8 2.5 9.5 Z" fill="#f2f4e6"/></svg>
<div class="t" style="left:306px;top:309.07px;font-size:11.5px;line-height:11.5px;color:#d5d7e1;letter-spacing:0.05px;">Batch Entry - Matrices</div>
<div style="left:939px;top:316px;width:11px;height:3px;background:#d9dbe3"></div>
<div style="left:961px;top:311px;width:11px;height:9px;border:2px solid #d9dbe3;border-top-width:3px"></div>
<svg style="position:absolute;left:982px;top:309px" width="11" height="11" viewBox="0 0 11 11"><path d="M1.6 1.6 L9.4 9.4 M9.4 1.6 L1.6 9.4" stroke="#d9dbe3" stroke-width="2.3" stroke-linecap="square"/></svg>
<div style="left:287px;top:330px;width:631px;height:221px;background:#c9cad6"></div>
<div style="left:293px;top:338px;width:33px;height:20px;background:#5d6071;border-radius:2px 2px 0 0"></div>
<div class="t" style="left:297px;top:343.69px;font-size:11px;line-height:11px;color:#dcdde6;letter-spacing:0px;transform:scaleX(0.85);transform-origin:left center;">Styles</div>
<div style="left:328px;top:338px;width:48px;height:20px;background:#cdced9"></div>
<div style="left:331px;top:341px;width:44px;height:15px;border:1px dotted #555"></div>
<div class="t" style="left:332px;top:343.69px;font-size:11px;line-height:11px;color:#1e1f26;letter-spacing:0px;transform:scaleX(0.85);transform-origin:left center;">Properties</div>
<div style="left:292px;top:360px;width:624px;height:185px;background:#c3c4d0;border:1px solid #cdcfda"></div>
<div style="left:295px;top:362px;width:618px;height:20px;background:#c6c7d3"></div>
<div class="t" style="left:301px;top:366.69px;font-size:11px;line-height:11px;color:#2a2c34;letter-spacing:-0.45px;">Style: Standard LS Shirt</div>
<div class="t" style="left:420px;top:366.69px;font-size:11px;line-height:11px;color:#2a2c34;letter-spacing:-0.37px;">Standard Long Sleeve Shirt</div>
<div class="t" style="left:557px;top:366.69px;font-size:11px;line-height:11px;color:#2a2c34;letter-spacing:-0.33px;">Required Date: 5/10/2013</div>
<div style="left:295px;top:383px;width:412px;height:160px;background:#c0c1ce"></div>
<div style="left:295px;top:383px;width:396px;height:16px;background:#5e6172"></div>
<div style="left:295px;top:399px;width:11px;height:97px;background:#5e6172"></div>
<div class="t" style="left:308px;top:385.69px;font-size:11px;line-height:11px;color:#e2e3ea;letter-spacing:0px;transform:scaleX(0.85);transform-origin:left center;">Property</div>
<div class="t" style="left:419px;top:385.69px;font-size:11px;line-height:11px;color:#e2e3ea;letter-spacing:0px;transform:scaleX(0.85);transform-origin:left center;">Value</div>
<div style="left:306px;top:399px;width:385px;height:16px;background:#e7f2fc;border-bottom:1px solid #d5d8e2"></div>
<div style="left:417px;top:399px;width:274px;height:16px;background:#d8d9df;border-bottom:1px solid #d5d8e2"></div>
<div style="left:417px;top:399px;width:1px;height:16px;background:#c9cbd5"></div>
<div class="t" style="left:308px;top:402.69px;font-size:11px;line-height:11px;color:#30323a;letter-spacing:0px;transform:scaleX(0.85);transform-origin:left center;">Shirt Collar</div>
<div class="t" style="left:419px;top:402.69px;font-size:11px;line-height:11px;color:#30323a;letter-spacing:0px;transform:scaleX(0.85);transform-origin:left center;">Normal</div>
<div style="left:306px;top:415px;width:385px;height:16px;background:#fdeef7;border-bottom:1px solid #d5d8e2"></div>
<div style="left:417px;top:415px;width:1px;height:16px;background:#c9cbd5"></div>
<div class="t" style="left:308px;top:418.84px;font-size:11px;line-height:11px;color:#30323a;letter-spacing:0px;transform:scaleX(0.85);transform-origin:left center;">Shirt Bottom</div>
<div class="t" style="left:419px;top:418.84px;font-size:11px;line-height:11px;color:#30323a;letter-spacing:0px;transform:scaleX(0.85);transform-origin:left center;">Straight</div>
<div style="left:306px;top:431px;width:385px;height:16px;background:#e7f2fc;border-bottom:1px solid #d5d8e2"></div>
<div style="left:417px;top:431px;width:1px;height:16px;background:#c9cbd5"></div>
<div class="t" style="left:308px;top:434.99px;font-size:11px;line-height:11px;color:#30323a;letter-spacing:0px;transform:scaleX(0.85);transform-origin:left center;">Shirt Back</div>
<div class="t" style="left:419px;top:434.99px;font-size:11px;line-height:11px;color:#30323a;letter-spacing:0px;transform:scaleX(0.85);transform-origin:left center;">Flat</div>
<div style="left:306px;top:447px;width:385px;height:17px;background:#fdeef7;border-bottom:1px solid #d5d8e2"></div>
<div style="left:417px;top:447px;width:1px;height:17px;background:#c9cbd5"></div>
<div class="t" style="left:308px;top:451.14px;font-size:11px;line-height:11px;color:#30323a;letter-spacing:0px;transform:scaleX(0.85);transform-origin:left center;">Cuffs</div>
<div class="t" style="left:419px;top:451.14px;font-size:11px;line-height:11px;color:#30323a;letter-spacing:0px;transform:scaleX(0.85);transform-origin:left center;">French</div>
<div style="left:306px;top:464px;width:385px;height:16px;background:#e7f2fc;border-bottom:1px solid #d5d8e2"></div>
<div style="left:417px;top:464px;width:1px;height:16px;background:#c9cbd5"></div>
<div class="t" style="left:308px;top:467.29px;font-size:11px;line-height:11px;color:#30323a;letter-spacing:0px;transform:scaleX(0.85);transform-origin:left center;">Pockets</div>
<div class="t" style="left:419px;top:467.29px;font-size:11px;line-height:11px;color:#30323a;letter-spacing:0px;transform:scaleX(0.85);transform-origin:left center;">Left</div>
<div style="left:306px;top:480px;width:385px;height:16px;background:#fdeef7;border-bottom:1px solid #d5d8e2"></div>
<div style="left:417px;top:480px;width:1px;height:16px;background:#c9cbd5"></div>
<div class="t" style="left:308px;top:483.44px;font-size:11px;line-height:11px;color:#30323a;letter-spacing:0px;transform:scaleX(0.85);transform-origin:left center;">Monogram</div>
<div class="t" style="left:419px;top:483.44px;font-size:11px;line-height:11px;color:#30323a;letter-spacing:0px;transform:scaleX(0.85);transform-origin:left center;">Left</div>
<div style="left:707px;top:383px;width:15px;height:160px;background:#cfd0da"></div>
<svg style="position:absolute;left:710px;top:387px" width="9" height="7" viewBox="0 0 9 7"><path d="M1 6 L4.5 1.5 L8 6 Z" fill="#5e6172"/></svg>
<div style="left:710px;top:399px;width:10px;height:68px;background:#5f6273;border-radius:3px"></div>
<div style="left:712px;top:431px;width:6px;height:1px;background:#c8c9d4"></div>
<div style="left:712px;top:433px;width:6px;height:1px;background:#c8c9d4"></div>
<div style="left:712px;top:435px;width:6px;height:1px;background:#c8c9d4"></div>
<svg style="position:absolute;left:710px;top:531px" width="9" height="7" viewBox="0 0 9 7"><path d="M1 1 L4.5 5.5 L8 1 Z" fill="#5e6172"/></svg>
<div style="left:724px;top:382px;width:187px;height:162px;background:#c8c9d5;border:1px solid #b6b8c5"></div>
<div style="left:725px;top:383px;width:185px;height:16px;background:#c0c1ce"></div>
<div class="t" style="left:733px;top:385.69px;font-size:11px;line-height:11px;color:#2a2c34;letter-spacing:0px;transform:scaleX(0.85);transform-origin:left center;">Matrix Style Image</div>
<div style="left:727px;top:402px;width:180px;height:138px;background:#e9e9f1"></div>
<svg style="position:absolute;left:749px;top:403px" width="135" height="137" viewBox="0 0 135 137"><defs><linearGradient id="g" x1="0" y1="0" x2="0" y2="1"><stop offset="0" stop-color="#58595d"/><stop offset="0.5" stop-color="#6c6d71"/><stop offset="1" stop-color="#8e9093"/></linearGradient>
<linearGradient id="s" x1="0" y1="0" x2="1" y2="0"><stop offset="0" stop-color="#e4e4e4"/><stop offset="0.25" stop-color="#f3f3f3"/><stop offset="0.7" stop-color="#f6f6f6"/><stop offset="1" stop-color="#e6e6e6"/></linearGradient>
<filter id="bl"><feGaussianBlur stdDeviation="0.5"/></filter></defs>
<rect width="135" height="137" fill="url(#g)"/>
<g filter="url(#bl)">
<path d="M33 28 L51 8 L80 4 L83 21 C95 24 108 28 116 33 C121 37 123 42 123 47 L124 137 L8 137 L9 90 C10 70 11 55 14 47 C17 39 25 32 33 28 Z" fill="url(#s)"/>
<path d="M34 28 L51 9 L79 5 L82 21 L72 31 L58 23 L47 36 L42 32 Z" fill="#fbfbfb"/>
<path d="M34 28 L45 23" stroke="#6d6d70" stroke-width="1.6" fill="none"/>
<path d="M51 19 L72 31 L82 21" stroke="#d8d8d8" stroke-width="0.9" fill="none"/>
<path d="M49 38 L44 90 L41 137" stroke="#dadada" stroke-width="1.2" fill="none"/>
<path d="M53 36 L48 137" stroke="#e4e4e4" stroke-width="0.8" fill="none"/>
<path d="M94 44 C90 70 92 100 92 137" stroke="#d8d8d8" stroke-width="1.2" fill="none"/>
<path d="M22 52 C19 80 22 110 23 137" stroke="#dcdcdc" stroke-width="1" fill="none"/>
</g></svg>
<div style="left:286px;top:551px;width:632px;height:4px;background:#45485a"></div>
<div style="left:592px;top:552px;width:21px;height:2px;background:#8d909e"></div>
<div style="left:287px;top:555px;width:631px;height:215px;background:#cdced9"></div>
<div style="left:287px;top:555px;width:631px;height:19px;background:#c2c3cf;border-bottom:1px solid #b5b7c3"></div>
<div style="left:287px;top:575px;width:631px;height:195px;background:#c1c2cf"></div>
<div style="left:293px;top:582px;width:33px;height:21px;background:#cdced9"></div>
<div class="t" style="left:298px;top:587.69px;font-size:11px;line-height:11px;color:#2a2c34;letter-spacing:0px;transform:scaleX(0.85);transform-origin:left center;">Matrix</div>
<div style="left:327px;top:582px;width:33px;height:20px;background:#5d6071;border-radius:2px 2px 0 0"></div>
<div class="t" style="left:331px;top:587.69px;font-size:11px;line-height:11px;color:#dcdde6;letter-spacing:0px;transform:scaleX(0.85);transform-origin:left center;">Notes</div>
<div style="left:294px;top:605px;width:617px;height:159px;background:#c0c1ce;border:1px solid #d5d6df"></div>
<div style="left:295px;top:607px;width:504px;height:156px;background:#efefef"></div>
<div style="left:420px;top:623px;width:317px;height:16px;background:#fdeef7"></div>
<div style="left:420px;top:639px;width:317px;height:16px;background:#e7f2fc"></div>
<div style="left:420px;top:655px;width:317px;height:16px;background:#fdeef7"></div>
<div style="left:420px;top:671px;width:317px;height:17px;background:#e7f2fc"></div>
<div style="left:420px;top:688px;width:317px;height:16px;background:#fdeef7"></div>
<div style="left:420px;top:704px;width:317px;height:16px;background:#e7f2fc"></div>
<div style="left:420px;top:720px;width:317px;height:16px;background:#fdeef7"></div>
<div style="left:420px;top:736px;width:317px;height:16px;background:#e7f2fc"></div>
<div style="left:295px;top:622px;width:504px;height:1px;background:#d6d7de"></div>
<div style="left:358px;top:638px;width:441px;height:1px;background:#d6d7de"></div>
<div style="left:295px;top:654px;width:504px;height:1px;background:#d6d7de"></div>
<div style="left:358px;top:670px;width:441px;height:1px;background:#d6d7de"></div>
<div style="left:295px;top:687px;width:504px;height:1px;background:#d6d7de"></div>
<div style="left:358px;top:703px;width:441px;height:1px;background:#d6d7de"></div>
<div style="left:295px;top:719px;width:504px;height:1px;background:#d6d7de"></div>
<div style="left:358px;top:735px;width:441px;height:1px;background:#d6d7de"></div>
<div style="left:295px;top:751px;width:504px;height:1px;background:#d6d7de"></div>
<div style="left:358px;top:607px;width:1px;height:156px;background:#d3d4dc"></div>
<div style="left:420px;top:607px;width:1px;height:156px;background:#d3d4dc"></div>
<div style="left:484px;top:607px;width:1px;height:156px;background:#d3d4dc"></div>
<div style="left:547px;top:607px;width:1px;height:156px;background:#d3d4dc"></div>
<div style="left:610px;top:607px;width:1px;height:156px;background:#d3d4dc"></div>
<div style="left:673px;top:607px;width:1px;height:156px;background:#d3d4dc"></div>
<div style="left:737px;top:607px;width:1px;height:156px;background:#d3d4dc"></div>
<div style="left:799px;top:607px;width:1px;height:156px;background:#d3d4dc"></div>
<div class="t" style="left:423px;top:609.69px;font-size:11px;line-height:11px;color:#30323a;letter-spacing:0px;transform:scaleX(0.85);transform-origin:left center;">S</div>
<div class="t" style="left:487px;top:609.69px;font-size:11px;line-height:11px;color:#30323a;letter-spacing:0px;transform:scaleX(0.85);transform-origin:left center;">M</div>
<div class="t" style="left:550px;top:609.69px;font-size:11px;line-height:11px;color:#30323a;letter-spacing:0px;transform:scaleX(0.85);transform-origin:left center;">L</div>
<div class="t" style="left:613px;top:609.69px;font-size:11px;line-height:11px;color:#30323a;letter-spacing:0px;transform:scaleX(0.85);transform-origin:left center;">XL</div>
<div class="t" style="left:676px;top:609.69px;font-size:11px;line-height:11px;color:#30323a;letter-spacing:0px;transform:scaleX(0.85);transform-origin:left center;">XXL</div>
<div class="t" style="left:297px;top:634.69px;font-size:11px;line-height:11px;color:#30323a;letter-spacing:0px;transform:scaleX(0.85);transform-origin:left center;">White</div>
<div class="t" style="left:361px;top:626.69px;font-size:11px;line-height:11px;color:#30323a;letter-spacing:0px;transform:scaleX(0.85);transform-origin:left center;">Tight</div>
<div style="left:424px;top:632px;width:2px;height:1px;background:#4a4b52"></div>
<div style="left:427px;top:632px;width:2px;height:1px;background:#4a4b52"></div>
<div style="left:430px;top:632px;width:2px;height:1px;background:#4a4b52"></div>
<div style="left:433px;top:632px;width:2px;height:1px;background:#4a4b52"></div>
<div style="left:488px;top:632px;width:2px;height:1px;background:#4a4b52"></div>
<div style="left:491px;top:632px;width:2px;height:1px;background:#4a4b52"></div>
<div style="left:494px;top:632px;width:2px;height:1px;background:#4a4b52"></div>
<div style="left:497px;top:632px;width:2px;height:1px;background:#4a4b52"></div>
<div style="left:551px;top:632px;width:2px;height:1px;background:#4a4b52"></div>
<div style="left:554px;top:632px;width:2px;height:1px;background:#4a4b52"></div>
<div style="left:557px;top:632px;width:2px;height:1px;background:#4a4b52"></div>
<div style="left:560px;top:632px;width:2px;height:1px;background:#4a4b52"></div>
<div style="left:614px;top:632px;width:2px;height:1px;background:#4a4b52"></div>
<div style="left:617px;top:632px;width:2px;height:1px;background:#4a4b52"></div>
<div style="left:620px;top:632px;width:2px;height:1px;background:#4a4b52"></div>
<div style="left:623px;top:632px;width:2px;height:1px;background:#4a4b52"></div>
<div style="left:677px;top:632px;width:2px;height:1px;background:#4a4b52"></div>
<div style="left:680px;top:632px;width:2px;height:1px;background:#4a4b52"></div>
<div style="left:683px;top:632px;width:2px;height:1px;background:#4a4b52"></div>
<div style="left:686px;top:632px;width:2px;height:1px;background:#4a4b52"></div>
<div class="t" style="left:361px;top:642.84px;font-size:11px;line-height:11px;color:#30323a;letter-spacing:0px;transform:scaleX(0.85);transform-origin:left center;">Standard</div>
<div style="left:424px;top:648px;width:2px;height:1px;background:#4a4b52"></div>
<div style="left:427px;top:648px;width:2px;height:1px;background:#4a4b52"></div>
<div style="left:430px;top:648px;width:2px;height:1px;background:#4a4b52"></div>
<div style="left:433px;top:648px;width:2px;height:1px;background:#4a4b52"></div>
<div class="t" style="left:487px;top:642.84px;font-size:11px;line-height:11px;color:#30323a;letter-spacing:0px;">1</div>
<div style="left:614px;top:648px;width:2px;height:1px;background:#4a4b52"></div>
<div style="left:617px;top:648px;width:2px;height:1px;background:#4a4b52"></div>
<div style="left:620px;top:648px;width:2px;height:1px;background:#4a4b52"></div>
<div style="left:623px;top:648px;width:2px;height:1px;background:#4a4b52"></div>
<div class="t" style="left:297px;top:666.99px;font-size:11px;line-height:11px;color:#30323a;letter-spacing:0px;transform:scaleX(0.85);transform-origin:left center;">Yellow</div>
<div class="t" style="left:361px;top:658.99px;font-size:11px;line-height:11px;color:#30323a;letter-spacing:0px;transform:scaleX(0.85);transform-origin:left center;">Tight</div>
<div style="left:424px;top:664px;width:2px;height:1px;background:#4a4b52"></div>
<div style="left:427px;top:664px;width:2px;height:1px;background:#4a4b52"></div>
<div style="left:430px;top:664px;width:2px;height:1px;background:#4a4b52"></div>
<div style="left:433px;top:664px;width:2px;height:1px;background:#4a4b52"></div>
<div style="left:488px;top:664px;width:2px;height:1px;background:#4a4b52"></div>
<div style="left:491px;top:664px;width:2px;height:1px;background:#4a4b52"></div>
<div style="left:494px;top:664px;width:2px;height:1px;background:#4a4b52"></div>
<div style="left:497px;top:664px;width:2px;height:1px;background:#4a4b52"></div>
<div style="left:551px;top:664px;width:2px;height:1px;background:#4a4b52"></div>
<div style="left:554px;top:664px;width:2px;height:1px;background:#4a4b52"></div>
<div style="left:557px;top:664px;width:2px;height:1px;background:#4a4b52"></div>
<div style="left:560px;top:664px;width:2px;height:1px;background:#4a4b52"></div>
<div style="left:614px;top:664px;width:2px;height:1px;background:#4a4b52"></div>
<div style="left:617px;top:664px;width:2px;height:1px;background:#4a4b52"></div>
<div style="left:620px;top:664px;width:2px;height:1px;background:#4a4b52"></div>
<div style="left:623px;top:664px;width:2px;height:1px;background:#4a4b52"></div>
<div style="left:677px;top:664px;width:2px;height:1px;background:#4a4b52"></div>
<div style="left:680px;top:664px;width:2px;height:1px;background:#4a4b52"></div>
<div style="left:683px;top:664px;width:2px;height:1px;background:#4a4b52"></div>
<div style="left:686px;top:664px;width:2px;height:1px;background:#4a4b52"></div>
<div class="t" style="left:361px;top:675.14px;font-size:11px;line-height:11px;color:#30323a;letter-spacing:0px;transform:scaleX(0.85);transform-origin:left center;">Standard</div>
<div style="left:424px;top:680px;width:2px;height:1px;background:#4a4b52"></div>
<div style="left:427px;top:680px;width:2px;height:1px;background:#4a4b52"></div>
<div style="left:430px;top:680px;width:2px;height:1px;background:#4a4b52"></div>
<div style="left:433px;top:680px;width:2px;height:1px;background:#4a4b52"></div>
<div style="left:488px;top:680px;width:2px;height:1px;background:#4a4b52"></div>
<div style="left:491px;top:680px;width:2px;height:1px;background:#4a4b52"></div>
<div style="left:494px;top:680px;width:2px;height:1px;background:#4a4b52"></div>
<div style="left:497px;top:680px;width:2px;height:1px;background:#4a4b52"></div>
<div style="left:551px;top:680px;width:2px;height:1px;background:#4a4b52"></div>
<div style="left:554px;top:680px;width:2px;height:1px;background:#4a4b52"></div>
<div style="left:557px;top:680px;width:2px;height:1px;background:#4a4b52"></div>
<div style="left:560px;top:680px;width:2px;height:1px;background:#4a4b52"></div>
<div style="left:614px;top:680px;width:2px;height:1px;background:#4a4b52"></div>
<div style="left:617px;top:680px;width:2px;height:1px;background:#4a4b52"></div>
<div style="left:620px;top:680px;width:2px;height:1px;background:#4a4b52"></div>
<div style="left:623px;top:680px;width:2px;height:1px;background:#4a4b52"></div>
<div style="left:677px;top:680px;width:2px;height:1px;background:#4a4b52"></div>
<div style="left:680px;top:680px;width:2px;height:1px;background:#4a4b52"></div>
<div style="left:683px;top:680px;width:2px;height:1px;background:#4a4b52"></div>
<div style="left:686px;top:680px;width:2px;height:1px;background:#4a4b52"></div>
<div class="t" style="left:297px;top:699.29px;font-size:11px;line-height:11px;color:#30323a;letter-spacing:0px;transform:scaleX(0.85);transform-origin:left center;">Blue</div>
<div class="t" style="left:361px;top:691.29px;font-size:11px;line-height:11px;color:#30323a;letter-spacing:0px;transform:scaleX(0.85);transform-origin:left center;">Tight</div>
<div style="left:424px;top:696px;width:2px;height:1px;background:#4a4b52"></div>
<div style="left:427px;top:696px;width:2px;height:1px;background:#4a4b52"></div>
<div style="left:430px;top:696px;width:2px;height:1px;background:#4a4b52"></div>
<div style="left:433px;top:696px;width:2px;height:1px;background:#4a4b52"></div>
<div style="left:488px;top:696px;width:2px;height:1px;background:#4a4b52"></div>
<div style="left:491px;top:696px;width:2px;height:1px;background:#4a4b52"></div>
<div style="left:494px;top:696px;width:2px;height:1px;background:#4a4b52"></div>
<div style="left:497px;top:696px;width:2px;height:1px;background:#4a4b52"></div>
<div style="left:551px;top:696px;width:2px;height:1px;background:#4a4b52"></div>
<div style="left:554px;top:696px;width:2px;height:1px;background:#4a4b52"></div>
<div style="left:557px;top:696px;width:2px;height:1px;background:#4a4b52"></div>
<div style="left:560px;top:696px;width:2px;height:1px;background:#4a4b52"></div>
<div style="left:614px;top:696px;width:2px;height:1px;background:#4a4b52"></div>
<div style="left:617px;top:696px;width:2px;height:1px;background:#4a4b52"></div>
<div style="left:620px;top:696px;width:2px;height:1px;background:#4a4b52"></div>
<div style="left:623px;top:696px;width:2px;height:1px;background:#4a4b52"></div>
<div style="left:677px;top:696px;width:2px;height:1px;background:#4a4b52"></div>
<div style="left:680px;top:696px;width:2px;height:1px;background:#4a4b52"></div>
<div style="left:683px;top:696px;width:2px;height:1px;background:#4a4b52"></div>
<div style="left:686px;top:696px;width:2px;height:1px;background:#4a4b52"></div>
<div class="t" style="left:361px;top:707.44px;font-size:11px;line-height:11px;color:#30323a;letter-spacing:0px;transform:scaleX(0.85);transform-origin:left center;">Standard</div>
<div style="left:424px;top:712px;width:2px;height:1px;background:#4a4b52"></div>
<div style="left:427px;top:712px;width:2px;height:1px;background:#4a4b52"></div>
<div style="left:430px;top:712px;width:2px;height:1px;background:#4a4b52"></div>
<div style="left:433px;top:712px;width:2px;height:1px;background:#4a4b52"></div>
<div style="left:488px;top:712px;width:2px;height:1px;background:#4a4b52"></div>
<div style="left:491px;top:712px;width:2px;height:1px;background:#4a4b52"></div>
<div style="left:494px;top:712px;width:2px;height:1px;background:#4a4b52"></div>
<div style="left:497px;top:712px;width:2px;height:1px;background:#4a4b52"></div>
<div style="left:551px;top:712px;width:2px;height:1px;background:#4a4b52"></div>
<div style="left:554px;top:712px;width:2px;height:1px;background:#4a4b52"></div>
<div style="left:557px;top:712px;width:2px;height:1px;background:#4a4b52"></div>
<div style="left:560px;top:712px;width:2px;height:1px;background:#4a4b52"></div>
<div style="left:614px;top:712px;width:2px;height:1px;background:#4a4b52"></div>
<div style="left:617px;top:712px;width:2px;height:1px;background:#4a4b52"></div>
<div style="left:620px;top:712px;width:2px;height:1px;background:#4a4b52"></div>
<div style="left:623px;top:712px;width:2px;height:1px;background:#4a4b52"></div>
<div style="left:677px;top:712px;width:2px;height:1px;background:#4a4b52"></div>
<div style="left:680px;top:712px;width:2px;height:1px;background:#4a4b52"></div>
<div style="left:683px;top:712px;width:2px;height:1px;background:#4a4b52"></div>
<div style="left:686px;top:712px;width:2px;height:1px;background:#4a4b52"></div>
<div class="t" style="left:297px;top:731.59px;font-size:11px;line-height:11px;color:#30323a;letter-spacing:0px;transform:scaleX(0.85);transform-origin:left center;">Red</div>
<div class="t" style="left:361px;top:723.59px;font-size:11px;line-height:11px;color:#30323a;letter-spacing:0px;transform:scaleX(0.85);transform-origin:left center;">Tight</div>
<div style="left:424px;top:728px;width:2px;height:1px;background:#4a4b52"></div>
<div style="left:427px;top:728px;width:2px;height:1px;background:#4a4b52"></div>
<div style="left:430px;top:728px;width:2px;height:1px;background:#4a4b52"></div>
<div style="left:433px;top:728px;width:2px;height:1px;background:#4a4b52"></div>
<div style="left:488px;top:728px;width:2px;height:1px;background:#4a4b52"></div>
<div style="left:491px;top:728px;width:2px;height:1px;background:#4a4b52"></div>
<div style="left:494px;top:728px;width:2px;height:1px;background:#4a4b52"></div>
<div style="left:497px;top:728px;width:2px;height:1px;background:#4a4b52"></div>
<div style="left:551px;top:728px;width:2px;height:1px;background:#4a4b52"></div>
<div style="left:554px;top:728px;width:2px;height:1px;background:#4a4b52"></div>
<div style="left:557px;top:728px;width:2px;height:1px;background:#4a4b52"></div>
<div style="left:560px;top:728px;width:2px;height:1px;background:#4a4b52"></div>
<div style="left:614px;top:728px;width:2px;height:1px;background:#4a4b52"></div>
<div style="left:617px;top:728px;width:2px;height:1px;background:#4a4b52"></div>
<div style="left:620px;top:728px;width:2px;height:1px;background:#4a4b52"></div>
<div style="left:623px;top:728px;width:2px;height:1px;background:#4a4b52"></div>
<div style="left:677px;top:728px;width:2px;height:1px;background:#4a4b52"></div>
<div style="left:680px;top:728px;width:2px;height:1px;background:#4a4b52"></div>
<div style="left:683px;top:728px;width:2px;height:1px;background:#4a4b52"></div>
<div style="left:686px;top:728px;width:2px;height:1px;background:#4a4b52"></div>
<div class="t" style="left:361px;top:739.74px;font-size:11px;line-height:11px;color:#30323a;letter-spacing:0px;transform:scaleX(0.85);transform-origin:left center;">Standard</div>
<div style="left:424px;top:745px;width:2px;height:1px;background:#4a4b52"></div>
<div style="left:427px;top:745px;width:2px;height:1px;background:#4a4b52"></div>
<div style="left:430px;top:745px;width:2px;height:1px;background:#4a4b52"></div>
<div style="left:433px;top:745px;width:2px;height:1px;background:#4a4b52"></div>
<div style="left:488px;top:745px;width:2px;height:1px;background:#4a4b52"></div>
<div style="left:491px;top:745px;width:2px;height:1px;background:#4a4b52"></div>
<div style="left:494px;top:745px;width:2px;height:1px;background:#4a4b52"></div>
<div style="left:497px;top:745px;width:2px;height:1px;background:#4a4b52"></div>
<div style="left:551px;top:745px;width:2px;height:1px;background:#4a4b52"></div>
<div style="left:554px;top:745px;width:2px;height:1px;background:#4a4b52"></div>
<div style="left:557px;top:745px;width:2px;height:1px;background:#4a4b52"></div>
<div style="left:560px;top:745px;width:2px;height:1px;background:#4a4b52"></div>
<div style="left:614px;top:745px;width:2px;height:1px;background:#4a4b52"></div>
<div style="left:617px;top:745px;width:2px;height:1px;background:#4a4b52"></div>
<div style="left:620px;top:745px;width:2px;height:1px;background:#4a4b52"></div>
<div style="left:623px;top:745px;width:2px;height:1px;background:#4a4b52"></div>
<div style="left:677px;top:745px;width:2px;height:1px;background:#4a4b52"></div>
<div style="left:680px;top:745px;width:2px;height:1px;background:#4a4b52"></div>
<div style="left:683px;top:745px;width:2px;height:1px;background:#4a4b52"></div>
<div style="left:686px;top:745px;width:2px;height:1px;background:#4a4b52"></div>
<div class="t" style="left:740px;top:642.84px;font-size:11px;line-height:11px;color:#30323a;letter-spacing:0px;">1</div>
<div style="left:295px;top:607px;width:504px;height:156px;overflow:hidden"><div class="t" style="left:192px;top:150px;font-size:11px;line-height:11px;color:#262830">1</div></div>
<div style="left:895px;top:607px;width:15px;height:156px;background:#cfd0da"></div>
<svg style="position:absolute;left:898px;top:611px" width="9" height="7" viewBox="0 0 9 7"><path d="M1 6 L4.5 1.5 L8 6 Z" fill="#5e6172"/></svg>
<div style="left:898px;top:624px;width:10px;height:109px;background:#5f6273;border-radius:3px"></div>
<div style="left:900px;top:676px;width:6px;height:1px;background:#c8c9d4"></div>
<div style="left:900px;top:678px;width:6px;height:1px;background:#c8c9d4"></div>
<div style="left:900px;top:680px;width:6px;height:1px;background:#c8c9d4"></div>
<svg style="position:absolute;left:898px;top:751px" width="9" height="7" viewBox="0 0 9 7"><path d="M1 1 L4.5 5.5 L8 1 Z" fill="#5e6172"/></svg>
<div style="left:923px;top:349px;width:70px;height:18px;background:linear-gradient(#63667a,#595c6d);border-radius:3px;border-top:1px solid #6b6e80"></div>
<div class="t" style="left:923.0px;top:353.19px;width:70px;text-align:center;font-size:11px;line-height:11px;color:#e6e7ee;letter-spacing:0px;transform:scaleX(0.85);transform-origin:center center;">Close</div>
<div style="left:923px;top:378px;width:70px;height:18px;background:linear-gradient(#63667a,#595c6d);border-radius:3px;border-top:1px solid #6b6e80"></div>
<div class="t" style="left:958px;top:382.19px;font-size:11px;line-height:11px;color:#e6e7ee;letter-spacing:0px;transform:scaleX(0.85);transform-origin:left center;">Add</div>
<svg style="position:absolute;left:943px;top:380px" width="11" height="14" viewBox="0 0 11 14"><path d="M0.5 0.5 H7 L10.5 4 V13.5 H0.5 Z" fill="#f2f5fb" stroke="#b9c6dd" stroke-width="0.8"/><path d="M7 0.5 V4 H10.5" fill="#c8d3e6"/></svg>
<div style="left:923px;top:400px;width:70px;height:18px;background:linear-gradient(#63667a,#595c6d);border-radius:3px;border-top:1px solid #6b6e80"></div>
<div class="t" style="left:956px;top:404.19px;font-size:11px;line-height:11px;color:#8b8e9d;letter-spacing:0px;transform:scaleX(0.85);transform-origin:left center;">Save</div>
<svg style="position:absolute;left:938px;top:402px" width="13" height="13" viewBox="0 0 13 13"><rect x="0" y="0" width="13" height="13" fill="#d9dadf"/><rect x="2" y="1" width="9" height="5" fill="#f4f4f6"/><rect x="3" y="8.5" width="6" height="4" fill="#8a8b92"/><rect x="4" y="9.5" width="2" height="2" fill="#eee"/></svg>
<div style="left:923px;top:423px;width:70px;height:18px;background:linear-gradient(#63667a,#595c6d);border-radius:3px;border-top:1px solid #6b6e80"></div>
<div class="t" style="left:952px;top:427.19px;font-size:11px;line-height:11px;color:#8b8e9d;letter-spacing:0px;transform:scaleX(0.85);transform-origin:left center;">Cancel</div>
<svg style="position:absolute;left:935px;top:425px" width="14" height="14" viewBox="0 0 14 14"><path d="M3 6 C5 1.5 12 2 12 7 C12 10 9 12 7 13" stroke="#a6a8b4" stroke-width="2.2" fill="none"/><path d="M0.5 3.5 L5.5 2 L4 7.5 Z" fill="#a6a8b4"/></svg>
<div style="left:923px;top:444px;width:70px;height:18px;background:linear-gradient(#63667a,#595c6d);border-radius:3px;border-top:1px solid #6b6e80"></div>
<div class="t" style="left:953px;top:448.19px;font-size:11px;line-height:11px;color:#e6e7ee;letter-spacing:0px;transform:scaleX(0.85);transform-origin:left center;">Delete</div>
<svg style="position:absolute;left:935px;top:446px" width="15" height="15" viewBox="0 0 15 15"><path d="M2 2 L13 13 M13 2 L2 13" stroke="#1f5fd0" stroke-width="2.8" stroke-linecap="round"/></svg>
<div style="left:931px;top:72px;width:70px;height:18px;background:linear-gradient(#63667a,#595c6d);border-radius:3px;border-top:1px solid #6b6e80"></div>
<div class="t" style="left:931.0px;top:76.19px;width:70px;text-align:center;font-size:11px;line-height:11px;color:#e6e7ee;letter-spacing:0px;transform:scaleX(0.85);transform-origin:center center;">Close</div>
<div style="left:931px;top:101px;width:70px;height:18px;background:linear-gradient(#63667a,#595c6d);border-radius:3px;border-top:1px solid #6b6e80"></div>
<div class="t" style="left:966px;top:105.19px;font-size:11px;line-height:11px;color:#e6e7ee;letter-spacing:0px;transform:scaleX(0.85);transform-origin:left center;">Add</div>
<svg style="position:absolute;left:951px;top:102px" width="11" height="14" viewBox="0 0 11 14"><path d="M0.5 0.5 H7 L10.5 4 V13.5 H0.5 Z" fill="#f2f5fb" stroke="#b9c6dd" stroke-width="0.8"/><path d="M7 0.5 V4 H10.5" fill="#c8d3e6"/></svg>
<div style="left:931px;top:124px;width:70px;height:17px;background:linear-gradient(#63667a,#595c6d);border-radius:3px;border-top:1px solid #6b6e80"></div>
<div class="t" style="left:964px;top:127.19px;font-size:11px;line-height:11px;color:#8b8e9d;letter-spacing:0px;transform:scaleX(0.85);transform-origin:left center;">Save</div>
<svg style="position:absolute;left:947px;top:126px" width="13" height="13" viewBox="0 0 13 13"><rect x="0" y="0" width="13" height="13" fill="#d9dadf"/><rect x="2" y="1" width="9" height="5" fill="#f4f4f6"/><rect x="3" y="8.5" width="6" height="4" fill="#8a8b92"/><rect x="4" y="9.5" width="2" height="2" fill="#eee"/></svg>
<div style="left:931px;top:146px;width:70px;height:17px;background:linear-gradient(#63667a,#595c6d);border-radius:3px;border-top:1px solid #6b6e80"></div>
<div class="t" style="left:960px;top:149.19px;font-size:11px;line-height:11px;color:#8b8e9d;letter-spacing:0px;transform:scaleX(0.85);transform-origin:left center;">Cancel</div>
<svg style="position:absolute;left:943px;top:148px" width="14" height="14" viewBox="0 0 14 14"><path d="M3 6 C5 1.5 12 2 12 7 C12 10 9 12 7 13" stroke="#a6a8b4" stroke-width="2.2" fill="none"/><path d="M0.5 3.5 L5.5 2 L4 7.5 Z" fill="#a6a8b4"/></svg>
<div style="left:931px;top:168px;width:70px;height:18px;background:linear-gradient(#63667a,#595c6d);border-radius:3px;border-top:1px solid #6b6e80"></div>
<div class="t" style="left:961px;top:172.19px;font-size:11px;line-height:11px;color:#e6e7ee;letter-spacing:0px;transform:scaleX(0.85);transform-origin:left center;">Delete</div>
<svg style="position:absolute;left:943px;top:170px" width="15" height="15" viewBox="0 0 15 15"><path d="M2 2 L13 13 M13 2 L2 13" stroke="#1f5fd0" stroke-width="2.8" stroke-linecap="round"/></svg>
<div style="left:931px;top:197px;width:70px;height:18px;background:linear-gradient(#63667a,#595c6d);border-radius:3px;border-top:1px solid #6b6e80"></div>
<div class="t" style="left:958px;top:201.19px;font-size:11px;line-height:11px;color:#e6e7ee;letter-spacing:0px;transform:scaleX(0.85);transform-origin:left center;">Related</div>
<svg style="position:absolute;left:941px;top:199px" width="13" height="14" viewBox="0 0 13 14"><rect x="2" y="2" width="10" height="11" fill="#dfe6f2"/><path d="M4 1 C1 1 1 7 4 7 L4 12" stroke="#1e50b8" stroke-width="2" fill="none"/><path d="M7 4 V12 M10 4 V12" stroke="#1e50b8" stroke-width="1.6"/></svg>
<div style="left:931px;top:221px;width:70px;height:18px;background:linear-gradient(#63667a,#595c6d);border-radius:3px;border-top:1px solid #6b6e80"></div>
<div class="t" style="left:958px;top:225.19px;font-size:11px;line-height:11px;color:#e6e7ee;letter-spacing:0px;transform:scaleX(0.85);transform-origin:left center;">Reports</div>
<svg style="position:absolute;left:943px;top:222px" width="12" height="15" viewBox="0 0 12 15"><path d="M0.5 0.5 H8 L11.5 4 V14.5 H0.5 Z" fill="#e3e9f4" stroke="#8fa2c4" stroke-width="0.8"/><path d="M2.5 5 H9 M2.5 7.5 H9 M2.5 10 H9" stroke="#7f95bd" stroke-width="0.9"/></svg>
<div style="left:931px;top:249px;width:70px;height:18px;background:linear-gradient(#63667a,#595c6d);border-radius:3px;border-top:1px solid #6b6e80"></div>
<div class="t" style="left:965px;top:253.19px;font-size:11px;line-height:11px;color:#e6e7ee;letter-spacing:0px;transform:scaleX(0.85);transform-origin:left center;">Print</div>
<svg style="position:absolute;left:950px;top:250px" width="12" height="16" viewBox="0 0 12 16"><rect x="2.5" y="0.5" width="7" height="5" fill="#f2f3f6" stroke="#9a9ca6" stroke-width="0.6"/><rect x="0" y="5" width="12" height="6" fill="#d6d8de"/><rect x="0" y="8" width="12" height="2" fill="#55575f"/><rect x="2.5" y="10" width="7" height="5" fill="#f4f5f7" stroke="#9a9ca6" stroke-width="0.6"/></svg>
<div style="left:931px;top:275px;width:70px;height:18px;background:linear-gradient(#63667a,#595c6d);border-radius:3px;border-top:1px solid #6b6e80"></div>
<div class="t" style="left:954px;top:279.19px;font-size:11px;line-height:11px;color:#e6e7ee;letter-spacing:0px;transform:scaleX(0.85);transform-origin:left center;">Deliveries</div>
<svg style="position:absolute;left:937px;top:276px" width="13" height="15" viewBox="0 0 13 15"><rect x="0.5" y="0.5" width="12" height="14" fill="#cfdcf0" stroke="#5a7ec0"/><path d="M4 4 V12 M7 6 V12 M10 3 V12" stroke="#2d5bb0" stroke-width="1.4"/></svg>
</body></html>
